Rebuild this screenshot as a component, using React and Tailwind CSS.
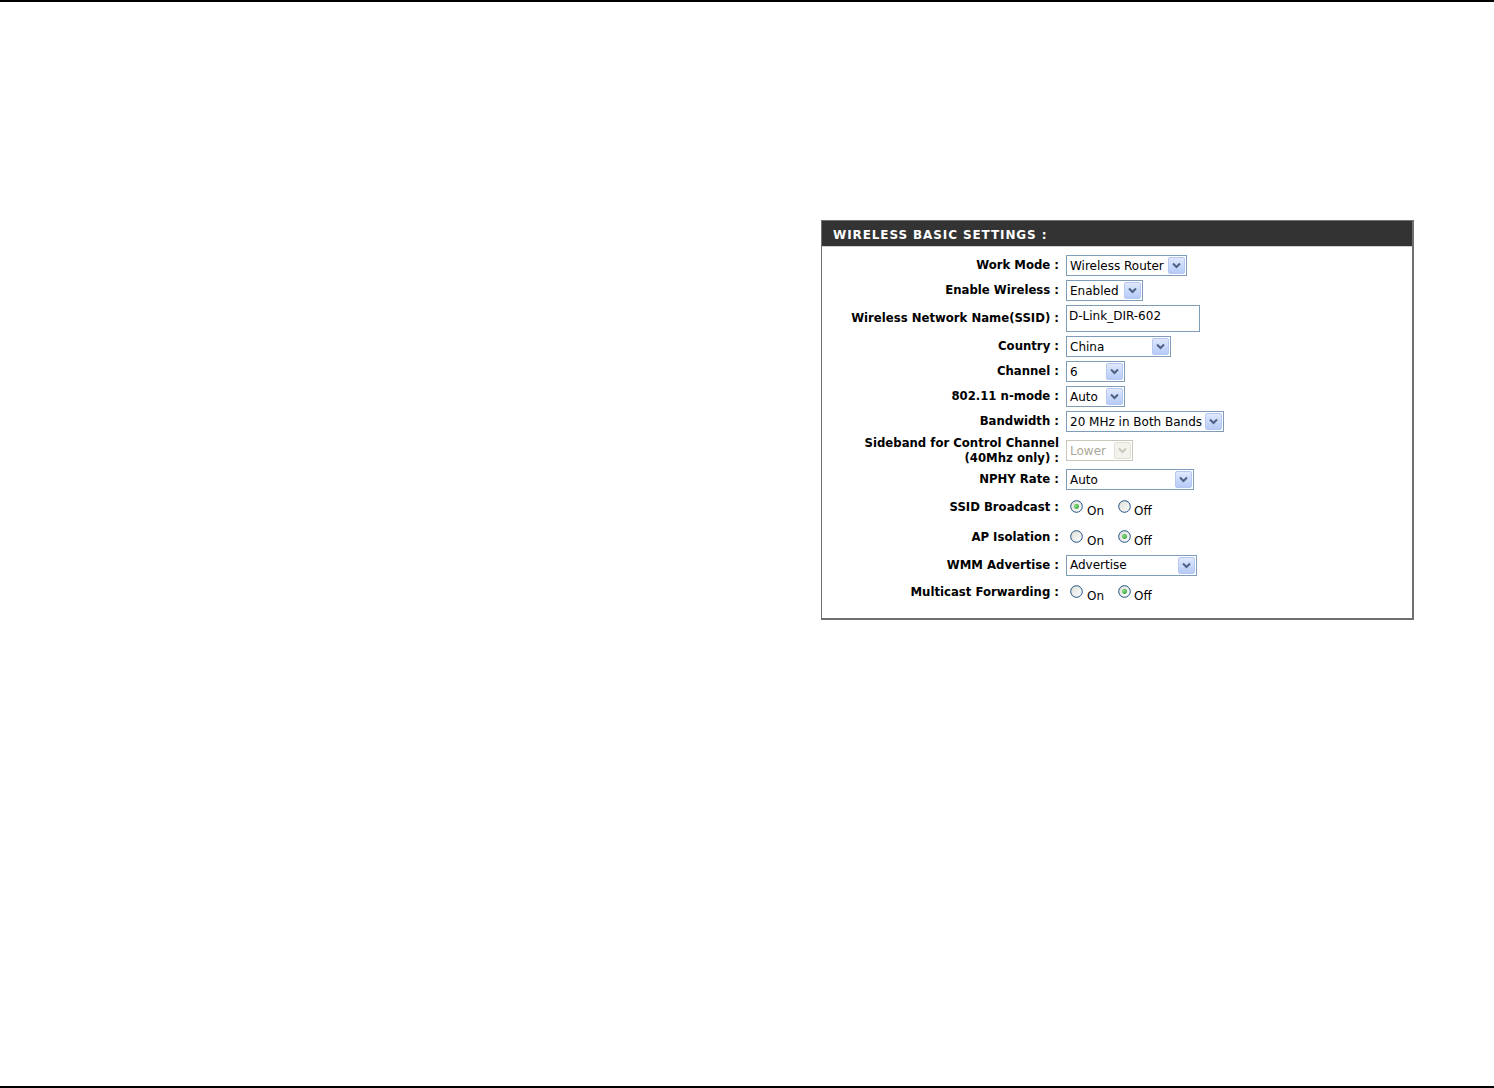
import React from "react";

const Arrow = ({ disabled }) => (
  <div
    className={
      "flex h-[17px] w-[17px] items-center justify-center rounded-[2px] border " +
      (disabled
        ? "border-[#e2e0d6] bg-[#f3f2ec]"
        : "border-[#b6c8f2] bg-gradient-to-b from-[#dfe8fd] to-[#b6cbf8]")
    }
  >
    <svg width="9" height="7" viewBox="0 0 9 7">
      <path
        d="M1 1.5 L4.5 5 L8 1.5"
        fill="none"
        stroke={disabled ? "#c9c7ba" : "#4d6185"}
        strokeWidth="2"
      />
    </svg>
  </div>
);

const Select = ({ value, w, disabled }) => (
  <div
    className={
      "flex h-[21px] items-center justify-between border pl-[3px] pr-[1px] text-[12px] " +
      (disabled
        ? "border-[#c9c7ba] bg-white text-[#aca899]"
        : "border-[#7f9db9] bg-white text-black")
    }
    style={{ width: w }}
  >
    <span className="leading-none">{value}</span>
    <Arrow disabled={disabled} />
  </div>
);

const Radio = ({ checked }) => (
  <svg width="13" height="13" viewBox="0 0 13 13" className="shrink-0">
    <defs>
      <linearGradient id="rg" x1="0" y1="0" x2="1" y2="1">
        <stop offset="0" stopColor="#dcdcd7" />
        <stop offset="1" stopColor="#ffffff" />
      </linearGradient>
      <radialGradient id="dot" cx="0.4" cy="0.4" r="0.6">
        <stop offset="0" stopColor="#9ee39a" />
        <stop offset="1" stopColor="#21a121" />
      </radialGradient>
    </defs>
    <circle cx="6.5" cy="6.5" r="5.8" fill="url(#rg)" stroke="#1c5180" strokeWidth="1" />
    {checked && <circle cx="6.5" cy="6.5" r="2.4" fill="url(#dot)" />}
  </svg>
);

const RadioPair = ({ on }) => (
  <div className="flex items-start pl-[4px] pt-[4px] text-[12px]">
    <div className="flex items-start">
      <Radio checked={on} />
      <span className="ml-[4px] mt-[4px] leading-[14px]">On</span>
    </div>
    <div className="ml-[14px] flex items-start">
      <Radio checked={!on} />
      <span className="ml-[3px] mt-[4px] leading-[14px]">Off</span>
    </div>
  </div>
);

const Row = ({ label, h, children }) => (
  <div className="flex items-center" style={{ height: h }}>
    <div className="w-[237px] shrink-0 text-right text-[11.7px] font-bold leading-[15px]">
      {label}
    </div>
    <div className="pl-[7px]">{children}</div>
  </div>
);

export default function App() {
  return (
    <div
      className="relative h-[1088px] w-full bg-white text-black"
      style={{ fontFamily: 'Tahoma, "DejaVu Sans", Verdana, sans-serif' }}
    >
      <div className="h-[2px] w-full bg-black" />
      <div className="ml-[821px] mt-[218px] w-[593px] border border-b-2 border-r-2 border-[#707070] bg-white">
        <div
          className="flex h-[26px] items-center border-b border-[#d0d0d0] bg-[#333333] pl-[11px] pt-[3px] text-[12px] font-bold tracking-[0.9px] text-white"
          style={{ fontFamily: '"DejaVu Sans", Verdana, sans-serif' }}
        >
          WIRELESS BASIC SETTINGS :
        </div>
        <div
          className="pt-[6px] pb-[12px]"
          style={{ fontFamily: '"DejaVu Sans", Verdana, sans-serif' }}
        >
          <Row label="Work Mode :" h={25}>
            <Select value="Wireless Router" w={121} />
          </Row>
          <Row label="Enable Wireless :" h={25}>
            <Select value="Enabled" w={77} />
          </Row>
          <Row label="Wireless Network Name(SSID) :" h={31}>
            <div className="flex h-[27px] w-[134px] items-start border border-[#7f9db9] bg-white pl-[2px] pt-[4px] text-[12px] leading-none">
              D-Link_DIR-602
            </div>
          </Row>
          <Row label="Country :" h={25}>
            <Select value="China" w={105} />
          </Row>
          <Row label="Channel :" h={25}>
            <Select value="6" w={59} />
          </Row>
          <Row label="802.11 n-mode :" h={25}>
            <Select value="Auto" w={59} />
          </Row>
          <Row label="Bandwidth :" h={25}>
            <Select value="20 MHz in Both Bands" w={158} />
          </Row>
          <Row
            label={
              <>
                Sideband for Control Channel
                <br />
                (40Mhz only) :
              </>
            }
            h={33}
          >
            <Select value="Lower" w={67} disabled />
          </Row>
          <Row label="NPHY Rate :" h={25}>
            <Select value="Auto" w={128} />
          </Row>
          <Row label="SSID Broadcast :" h={30}>
            <RadioPair on={true} />
          </Row>
          <Row label="AP Isolation :" h={30}>
            <RadioPair on={false} />
          </Row>
          <Row label="WMM Advertise :" h={26}>
            <Select value="Advertise" w={131} />
          </Row>
          <Row label="Multicast Forwarding :" h={28}>
            <RadioPair on={false} />
          </Row>
        </div>
      </div>
      <div className="absolute bottom-0 left-0 h-[2px] w-full bg-black" />
    </div>
  );
}
